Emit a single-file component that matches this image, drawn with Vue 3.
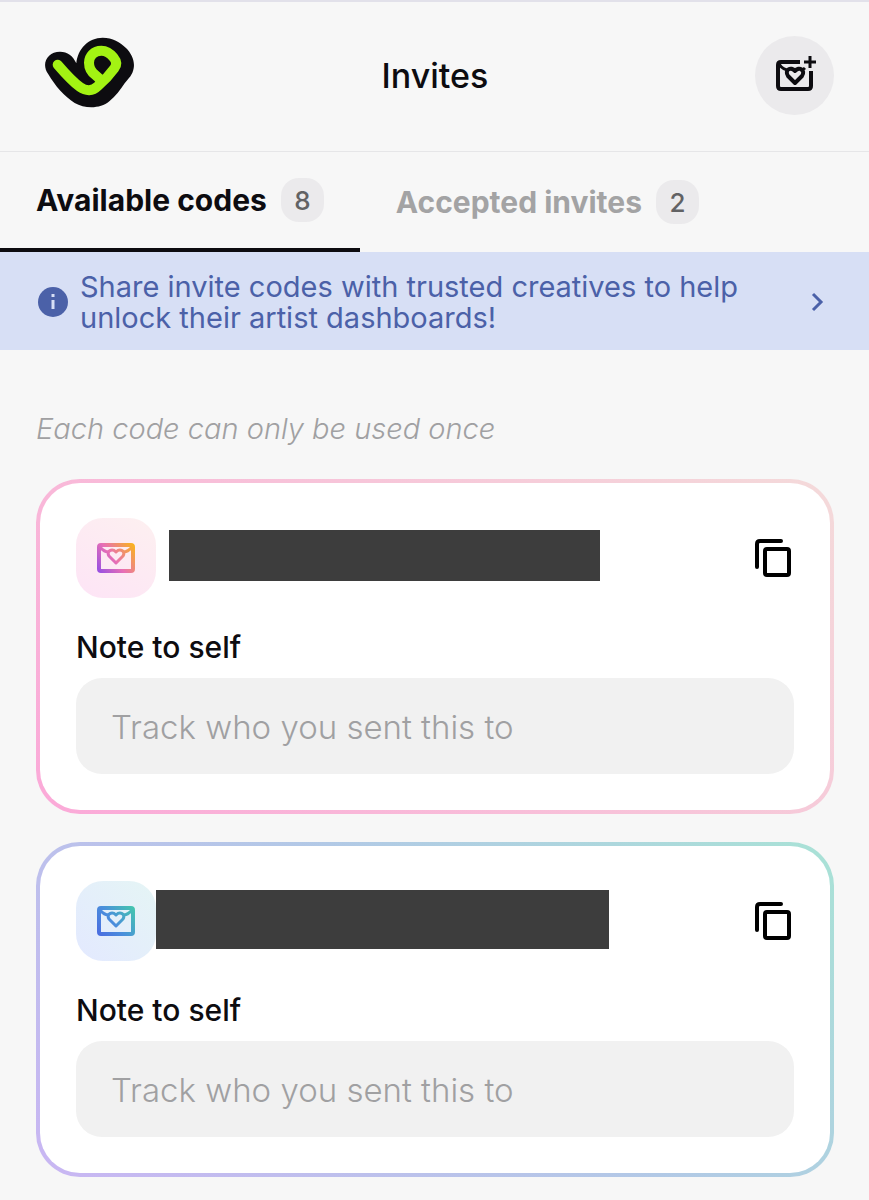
<script setup>
import { ref } from 'vue'

const tab = ref('available')

const cards = ref([
  { id: 'one', theme: 'pink', stops: ['#9b51e0', '#e86fb5', '#f9b122'], note: '' },
  { id: 'two', theme: 'blue', stops: ['#4b6fe0', '#4a8fdc', '#44c3b0'], note: '' },
])
</script>

<template>
  <main class="page">
    <header class="header">
      <a class="logo" href="#" aria-label="Home">
        <svg viewBox="42 36 273 213" width="91" height="71" aria-hidden="true">
          <path
            fill="#0d0c10"
            d="M90 80C113 80 128 92 139 115C143 72 175 38 218 38C248 38 270 51 288 69C305 86 315 108 311 130C308 150 296 160 284 175C270 195 257 214 238 229C211 252 165 252 134 234C103 215 75 182 55 148C32 116 52 80 90 80Z"
          />
          <path
            fill="none"
            stroke="#a3f313"
            stroke-width="30"
            stroke-linecap="round"
            stroke-linejoin="round"
            d="M83 119C108 148 128 170 150 186C168 199 188 199 203 184Q232 159 253 130C261 120 261 110 251 98C240 84 227 77 214 77C192 77 177 93 177 113C177 130 184 141 196 150C204 156 208 160 211 166"
          />
        </svg>
      </a>
      <h1 class="title">Invites</h1>
      <button class="new-invite" type="button" aria-label="New invite">
        <svg viewBox="0 0 44 44" width="44" height="44" fill="none" stroke="#0d0c10" stroke-width="4" aria-hidden="true">
          <path d="M27 8H8Q5 8 5 11V32Q5 35 8 35H35Q38 35 38 32V17" />
          <path d="M6 10Q10 16 16 16M32 14Q30 16 27 16" stroke-width="3" />
          <path d="M22 29L15 22C11 16 18 12 22 17C26 12 33 16 29 22Z" stroke-width="4" stroke-linejoin="round" />
          <path d="M37 2V14M31 8H43" stroke-width="3" />
        </svg>
      </button>
    </header>

    <nav class="tabs" role="tablist">
      <button class="tab" :class="{ active: tab === 'available' }" type="button" role="tab" :aria-selected="tab === 'available'" @click="tab = 'available'">
        Available codes <span class="count">8</span>
      </button>
      <button class="tab" :class="{ active: tab === 'accepted' }" type="button" role="tab" :aria-selected="tab === 'accepted'" @click="tab = 'accepted'">
        Accepted invites <span class="count">2</span>
      </button>
    </nav>

    <a class="banner" href="#">
      <svg class="info" viewBox="0 0 30 30" width="30" height="30" aria-hidden="true">
        <circle cx="15" cy="15" r="15" fill="#4b61a8" />
        <path d="M15 7V10M15 13V22" stroke="#d7dff5" stroke-width="3" />
      </svg>
      <span class="banner-text">Share invite codes with trusted creatives to help unlock their artist dashboards!</span>
      <svg viewBox="0 0 16 20" width="16" height="20" fill="none" stroke="#4b61a8" stroke-width="3" aria-hidden="true">
        <path d="M4 2L12 10L4 18" />
      </svg>
    </a>

    <section class="content">
      <p class="hint">Each code can only be used once</p>

      <article v-for="card in cards" :key="card.id" class="card" :class="card.theme">
        <div class="code-row">
          <span class="tile">
            <svg viewBox="0 0 38 30" width="38" height="30" fill="none" aria-hidden="true">
              <defs>
                <linearGradient :id="'ink-' + card.id" gradientUnits="userSpaceOnUse" x1="2" y1="28" x2="36" y2="2">
                  <stop offset="0" :stop-color="card.stops[0]" />
                  <stop offset="0.45" :stop-color="card.stops[1]" />
                  <stop offset="1" :stop-color="card.stops[2]" />
                </linearGradient>
              </defs>
              <g :stroke="'url(#ink-' + card.id + ')'" stroke-width="3" stroke-linejoin="round">
                <rect x="2" y="2" width="34" height="26" rx="2" stroke-width="4" />
                <path d="M3 4Q7 9 12 9M35 4Q31 9 26 9" />
                <path d="M19 20L12 13C9 8 15 5 19 9C23 5 29 8 26 13Z" />
              </g>
            </svg>
          </span>
          <span class="redacted"></span>
          <button class="copy" type="button" aria-label="Copy code">
            <svg viewBox="0 0 36 38" width="36" height="38" fill="none" stroke="#000" stroke-width="4" stroke-linecap="round" aria-hidden="true">
              <path d="M2 28V5Q2 2 5 2H26" />
              <rect x="10" y="10" width="24" height="26" rx="2" />
            </svg>
          </button>
        </div>
        <label class="label" :for="'note-' + card.id">Note to self</label>
        <input :id="'note-' + card.id" v-model="card.note" class="note" type="text" placeholder="Track who you sent this to" />
      </article>
    </section>
  </main>
</template>

<style>
body {
  background: #f7f7f7;
}
</style>

<style scoped>
.page {
  box-sizing: border-box;
  border-top: 2px solid #e2e1ea;
  font-family: Inter, "Open Sans", sans-serif;
  color: #0d0c10;
}

.page button {
  border: 0;
  padding: 0;
  background: none;
  font: inherit;
  color: inherit;
  cursor: pointer;
}

.header {
  display: grid;
  grid-template-columns: 1fr auto 1fr;
  align-items: center;
  padding: 34px 35px 36px 36px;
  border-bottom: 1px solid #e6e6e8;
}

.logo {
  display: flex;
  padding: 0 0 6px 8px;
}

.title {
  margin: 0;
  font-size: 34px;
  line-height: 40px;
  font-weight: 500;
}

.new-invite {
  justify-self: end;
  display: flex;
  align-items: center;
  justify-content: center;
  width: 79px;
  height: 79px;
  border-radius: 50%;
}

.page .new-invite {
  background: #ebeaec;
}

.tabs {
  display: flex;
  height: 100px;
}

.tab {
  display: flex;
  align-items: center;
  gap: 14px;
}

.page .tab {
  padding: 0 36px;
  font-size: 30px;
  font-weight: 700;
  color: #a3a3a4;
}

.page .tab.active {
  border-bottom: 4px solid #0d0c10;
  color: #0d0c10;
}

.count {
  display: grid;
  place-items: center;
  width: 43px;
  height: 44px;
  border-radius: 18px;
  background: #ebeaec;
  color: #626264;
  font-size: 26px;
  font-weight: 500;
}

.banner {
  display: flex;
  align-items: center;
  gap: 12px;
  padding: 19px 44px 17px 38px;
  background: #d7dff5;
  color: #4b61a8;
  font-size: 29px;
  line-height: 31px;
  text-decoration: none;
}

.banner svg {
  flex: none;
}

.banner-text {
  flex: 1;
  padding-right: 50px;
}

.hint,
.note {
  font-weight: 350;
}

.content {
  display: flex;
  flex-direction: column;
  gap: 28px;
  padding: 59px 35px 22px 36px;
}

.hint {
  margin: 0 0 2px;
  font-size: 29px;
  line-height: 40px;
  font-style: italic;
  color: #a0a0a2;
}

.card {
  display: flex;
  flex-direction: column;
  padding: 35px 36px 36px;
  border: 4px solid transparent;
  border-radius: 44px;
}

.pink {
  background: linear-gradient(#fff, #fff) padding-box, linear-gradient(45deg, #fba9d8, #f4dada) border-box;
}

.blue {
  background: linear-gradient(#fff, #fff) padding-box, linear-gradient(45deg, #c9b6f3, #b2c9e6 55%, #a9e2d6) border-box;
}

.code-row {
  display: flex;
  align-items: center;
}

.tile {
  display: grid;
  place-items: center;
  flex: none;
  width: 80px;
  height: 80px;
  border-radius: 27px;
}

.pink .tile {
  background: linear-gradient(30deg, #fde4f6, #fdf0f0);
}

.blue .tile {
  background: linear-gradient(45deg, #e3e9ff, #e5f5f5);
}

.redacted {
  background: #3d3d3d;
}

.pink .redacted {
  width: 431px;
  height: 51px;
  margin: 0 0 6px 13px;
}

.blue .redacted {
  width: 453px;
  height: 59px;
  margin-bottom: 4px;
}

.copy {
  display: flex;
  margin-left: auto;
}

.page .copy {
  padding: 3px;
}

.label {
  margin: 29px 0 11px;
  font-size: 30px;
  line-height: 40px;
  font-weight: 500;
}

.note {
  box-sizing: border-box;
  width: 100%;
  height: 96px;
  padding: 2px 35px 0;
  border: 0;
  border-radius: 26px;
  background: #f1f1f1;
  font-family: inherit;
  font-size: 33px;
  color: #0d0c10;
}

.note::placeholder {
  color: #a0a0a2;
  opacity: 1;
}
</style>
